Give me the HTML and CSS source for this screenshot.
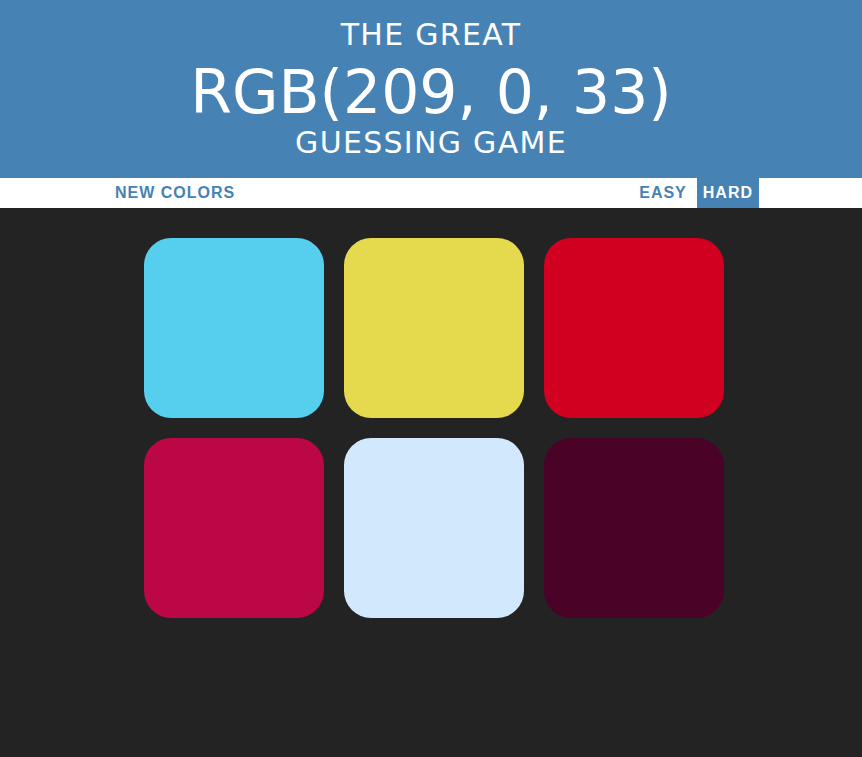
FILE: index.html
```html
<!DOCTYPE html>
<html lang="en">
<head>
<meta charset="utf-8">
<title>Color Game</title>
<link rel="stylesheet" href="styles.css">
</head>
<body>
<h1 class="title">
  <span class="title-small">The Great</span>
  <span class="title-big">RGB(209, 0, 33)</span>
  <span class="title-small">Guessing Game</span>
</h1>
<div class="stripe">
  <button class="btn">New Colors</button>
  <div class="modes">
    <button class="btn">Easy</button>
    <button class="btn selected">Hard</button>
  </div>
</div>
<div class="grid">
  <div class="square sq1"></div>
  <div class="square sq2"></div>
  <div class="square sq3"></div>
  <div class="square sq4"></div>
  <div class="square sq5"></div>
  <div class="square sq6"></div>
</div>
</body>
</html>
```
FILE: styles.css
```css
html, body {
  margin: 0;
  padding: 0;
}
body {
  background: #232323;
  height: 757px;
  font-family: "Liberation Sans", Arial, sans-serif;
}
.title {
  margin: 0;
  background: #4682b4;
  color: #fff;
  text-align: center;
  text-transform: uppercase;
  font-family: "DejaVu Sans", sans-serif;
  font-weight: 400;
  height: 178px;
  box-sizing: border-box;
  padding-top: 17px;
  display: flex;
  flex-direction: column;
  align-items: center;
}
.title-small {
  font-size: 30px;
  line-height: 36px;
  letter-spacing: 1.3px;
}
.title-big {
  font-size: 60px;
  line-height: 66px;
  margin-top: 6px;
}
.stripe {
  background: #fff;
  height: 30px;
  display: flex;
  justify-content: space-between;
  padding: 0 103px 0 109px;
}
.modes {
  display: flex;
  gap: 4px;
}
.btn {
  border: none;
  background: #fff;
  color: #4682b4;
  font-family: "Liberation Sans", Arial, sans-serif;
  font-weight: 700;
  font-size: 16px;
  letter-spacing: 1px;
  text-transform: uppercase;
  height: 30px;
  padding: 0 6px;
  margin: 0;
}
.btn.selected {
  background: #4682b4;
  color: #fff;
}
.grid {
  width: 580px;
  margin: 30px 0 0 144px;
  display: grid;
  grid-template-columns: repeat(3, 180px);
  gap: 20px;
}
.square {
  width: 180px;
  height: 180px;
  border-radius: 27px;
}
.sq1 { background: rgb(86, 206, 238); }
.sq2 { background: rgb(229, 218, 78); }
.sq3 { background: rgb(209, 0, 33); }
.sq4 { background: rgb(187, 7, 69); }
.sq5 { background: rgb(210, 232, 252); }
.sq6 { background: rgb(74, 2, 38); }
```
